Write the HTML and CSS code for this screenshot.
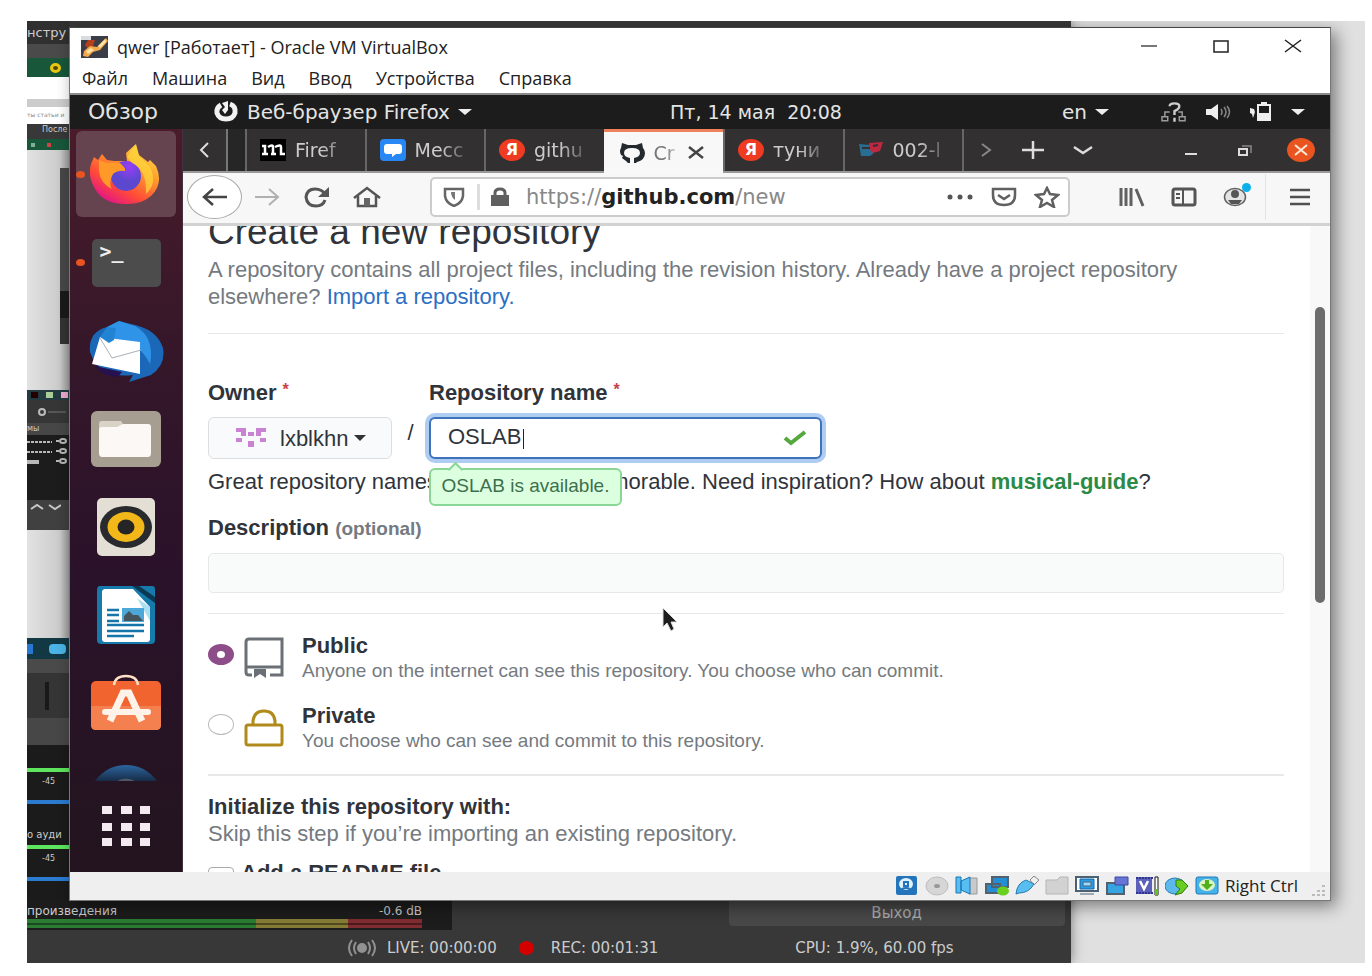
FILE: index.html
```html
<!DOCTYPE html>
<html lang="ru">
<head>
<meta charset="utf-8">
<title>qwer [Работает] - Oracle VM VirtualBox</title>
<link rel="stylesheet" href="styles.css">
</head>
<body>
<main class="desktop">
  <section class="studio" aria-label="OBS">
    <div class="strip">
      <div class="s-title">нстру</div>
      <div class="s-gray"></div>
      <div class="s-green"><i class="smile"></i></div>
      <div class="s-white"></div>
      <div class="s-line"></div>
      <div class="s-addr">ты статьи и</div>
      <div class="s-dark">После</div>
      <div class="s-green2"><i></i><i class="red"></i></div>
      <div class="s-page"><div class="s-inner"></div></div>
      <div class="s-task"><i class="c1"></i><i class="c2"></i><i class="c3"></i></div>
      <div class="s-head"><svg width="30" height="14" viewBox="0 0 30 14"><circle cx="6" cy="7" r="3" fill="none" stroke="#bbb" stroke-width="2"/><path d="M12 7h18" stroke="#777"/></svg></div>
      <div class="s-sub">мы</div>
      <div class="s-log">
        <svg width="42" height="34" viewBox="0 0 42 34" stroke="#b8b8b8" stroke-width="2" fill="none"><path d="M0 7h25M0 17h25" stroke-dasharray="3 1"/><path d="M0 27h12" stroke-width="4"/><path d="M29 6h3M29 16h3M29 26h3"/><ellipse cx="36" cy="6" rx="3" ry="2"/><ellipse cx="36" cy="16" rx="3" ry="2"/><ellipse cx="36" cy="26" rx="3" ry="2"/></svg>
      </div>
      <div class="s-arrows"><svg width="34" height="10" viewBox="0 0 34 10" fill="none" stroke="#c8c8c8" stroke-width="2"><path d="M4 7l6-4 6 4M22 3l6 4 6-4"/></svg></div>
      <div class="s-page2"></div>
      <div class="s-task2"><i></i><i></i></div>
      <div class="s-gray"></div>
      <div class="s-fader"><i></i></div>
      <div class="s-gray3"></div>
      <div class="s-mix"><i class="g"></i><span>-45</span><i class="b"></i><em>о ауди</em><i class="g"></i><span>-45</span><i class="b"></i></div>
    </div>
    <div class="mixer">
      <div class="meter">
        <div class="meter-label"><span>произведения</span><span>-0.6 dB</span></div>
        <div class="meter-bar"><i class="ok"></i><i class="warn"></i><i class="loud"></i></div>
      </div>
      <button class="exit">Выход</button>
    </div>
    <footer class="stats">
      <svg class="live-icon" width="30" height="20" viewBox="0 0 30 20" fill="none" stroke="#929292" stroke-width="2"><circle cx="15" cy="10" r="4" fill="#929292"/><path d="M9 4q-4 6 0 12M5 2q-6 8 0 16M21 4q4 6 0 12M25 2q6 8 0 16"/></svg>
      <span class="live">LIVE: 00:00:00</span><i class="rec-dot"></i><span class="rec">REC: 00:01:31</span><span class="cpu">CPU: 1.9%, 60.00 fps</span>
    </footer>
  </section>

  <section class="vm">
    <header class="titlebar">
      <svg width="27" height="22" viewBox="0 0 27 22"><path fill="#3a3c46" d="M0 0h27v22H0z"/><path fill="#d8dce0" d="M0 0h10v4H0z"/><path fill="#b5401e" d="M7 4h7l-2 6-5 3-3-4z"/><path fill="#f3a94c" d="M3 15l6-5 7 1 9-9 2 3-8 9-7 2-5 5-5-1z"/><path fill="#ffe2a5" d="M5 15l5-3 3 2-6 4zM17 10l7-7 1 3-6 6z"/></svg>
      <h1 class="vm-title">qwer [Работает] - Oracle VM VirtualBox</h1>
      <button class="win-btn" aria-label="Свернуть"><svg width="18" height="16" viewBox="0 0 18 16"><path d="M1 7h16" stroke="#777" stroke-width="2"/></svg></button>
      <button class="win-btn" aria-label="Развернуть"><svg width="18" height="16" viewBox="0 0 18 16"><path d="M2 2h14v11H2z" fill="none" stroke="#222" stroke-width="1.5"/></svg></button>
      <button class="win-btn" aria-label="Закрыть"><svg width="18" height="16" viewBox="0 0 18 16"><path d="M1 1l16 12M17 1L1 13" stroke="#222" stroke-width="1.5"/></svg></button>
    </header>
    <nav class="menubar"><button>Файл</button><button>Машина</button><button>Вид</button><button>Ввод</button><button>Устройства</button><button>Справка</button></nav>

    <div class="guest">
      <div class="panel">
        <button class="activities">Обзор</button>
        <button class="app-menu"><svg width="26" height="22" viewBox="0 0 26 22"><path d="M8 4Q3 7 4 12q2 6 9 6t9-6q1-7-5-9" fill="none" stroke="#f2f2f2" stroke-width="5"/><path d="M9 2l6-2v9l-3 4-3-4 3-3z" fill="#f2f2f2"/></svg><span>Веб-браузер Firefox</span><i class="tri"></i></button>
        <span class="clock">Пт, 14 мая&nbsp; 20:08</span>
        <div class="tray">
          <button class="lang">en <i class="tri"></i></button>
          <svg width="26" height="24" viewBox="0 0 27 24" fill="none" stroke="#9c9c9c" stroke-width="1.5"><path d="M1 17h6v4H1zM19 17h6v4h-6zM4 17v-5h5M22 17v-5h-4"/><path d="M9 6q0-3 5-3t5 3q0 3-5 5v4M14 18v4" stroke="#ccc" stroke-width="2.500"/></svg>
          <svg width="26" height="20" viewBox="0 0 26 20"><path d="M1 7h5l7-5v16l-7-5H1z" fill="#eee"/><path d="M16 7q2 3 0 6M19 5q4 5 0 10M22 4q5 6 0 12" fill="none" stroke="#888" stroke-width="1.5"/></svg>
          <svg width="24" height="22" viewBox="0 0 24 22"><path d="M1 7l4 1 1 3-2 6-1-4-2-1z" fill="#eee"/><path d="M9 4h12v15H9z" fill="none" stroke="#eee" stroke-width="2"/><path d="M12 1h6v3h-6zM10 12h10v6H10z" fill="#eee"/></svg>
          <i class="tri"></i>
        </div>
      </div>
      <aside class="dock">
        <button class="slot active running" aria-label="Firefox"><svg width="72" height="62" viewBox="0 0 72 62"><defs><linearGradient id="ff" x1="1" y1="0" x2=".3" y2="1"><stop offset="0" stop-color="#fff44f"/><stop offset=".4" stop-color="#ffa02d"/><stop offset=".75" stop-color="#ff4a38"/><stop offset="1" stop-color="#e31587"/></linearGradient><radialGradient id="fp" cx=".6" cy=".2"><stop offset="0" stop-color="#9a3df5"/><stop offset="1" stop-color="#5b48cf"/></radialGradient></defs><path fill="url(#ff)" d="M4 14l4 3 4-6 5 6 7 1 13 0-1-8 10-9 3 11 9 7 2-2 6 6q8 18-5 30Q50 62 35 61 16 61 7 49-3 35 1 21z"/><circle cx="36" cy="33" r="15" fill="url(#fp)"/><path fill="#ff9928" d="M9 17l8 3 13 0q6 5 5 8-7-1-12 3-5 9-1 15Q10 40 9 28z"/><path fill="#ffd43b" d="M37 14l8-12 4 11 11 11q8 16-4 27 1-24-14-31z" opacity=".75"/></svg></button>
        <button class="slot running" aria-label="Терминал"><span class="terminal">&gt;_</span></button>
        <button class="slot" aria-label="Thunderbird"><svg width="78" height="62" viewBox="0 0 78 62"><path fill="#1c68b8" d="M3 32Q1 12 20 7L32 1l12 3q26 5 32 24 3 17-12 27l-22 7 4-7Q12 59 3 32z"/><path fill="#2f94e8" d="M20 7L32 1l16 5q20 11 15 38Q49 15 17 22z"/><path fill="#fff" d="M13 17l40 5v32L5 44z"/><path d="M13 18l12 20 29-8" fill="none" stroke="#a9b0b8"/><path fill="#2383d3" d="M13 17L20 7l9 1-2 12-5 3z"/><path fill="#251050" d="M8 46l27 6-4 5Q15 56 8 46z"/></svg></button>
        <button class="slot" aria-label="Файлы"><svg width="72" height="58" viewBox="0 0 72 58"><rect x="1" y="1" width="70" height="56" rx="6" fill="#a69e91"/><path fill="#d9d2c7" d="M9 18V14q0-3 3-3h19l3 5v6H9z"/><path fill="#fcf8f5" d="M9 20q0-3 3-3h15l6-3h25q3 0 3 3v26q0 4-3 4H12q-3 0-3-4z"/></svg></button>
        <button class="slot" aria-label="Rhythmbox"><svg width="60" height="58" viewBox="0 0 60 58"><rect x="1" y="0" width="58" height="58" rx="5" fill="#e4dfd4"/><ellipse cx="30" cy="29" rx="26" ry="21" fill="#292a2d"/><ellipse cx="30" cy="29" rx="18.5" ry="15" fill="#f2b81a"/><ellipse cx="30" cy="29" rx="8.500" ry="7.500" fill="#252525"/></svg></button>
        <button class="slot" aria-label="Writer"><svg width="60" height="58" viewBox="0 0 60 58"><path fill="#167aaa" d="M4 0h52q3 0 3 3v51q0 4-4 4H5q-4 0-4-4V4q0-4 3-4z"/><path fill="#fff" d="M8 3h29l17 18v32q0 3-3 3H9q-3 0-3-3V5z"/><path fill="#0b3954" d="M36 0l23 17v-6L43 0z"/><path fill="#75c9e8" d="M41 12l13 9v14z" opacity=".6"/><path d="M11 24h12M11 29h12M11 35h12M11 39h37M11 45h37M11 50h27" stroke="#1675a8" stroke-width="2.500"/><path fill="#4ba8d8" d="M26 22h22v14H26z"/><path fill="#46545b" d="M28 35v-5l5-5 4 4h5l5 6z"/></svg></button>
        <button class="slot" aria-label="Ubuntu Software"><svg width="72" height="58" viewBox="0 0 72 58"><rect x="1" y="7" width="70" height="49" rx="5" fill="#f16430"/><path fill="#f4804f" d="M1 32h70v19q0 5-5 5H6q-5 0-5-5z"/><path d="M24 11Q25 2 36 2t12 9" fill="none" stroke="#ffe0c5" stroke-width="2.500"/><path d="M20 47l13-28h6l13 28" fill="none" stroke="#fff2e8" stroke-width="7"/><path d="M15 38h43" stroke="#fff2e8" stroke-width="6" stroke-linecap="round"/></svg></button>
        <button class="slot peek" aria-label="Справка"><svg width="66" height="16" viewBox="0 0 66 16"><defs><linearGradient id="hp" x2="0" y2="1"><stop stop-color="#2c659e"/><stop offset="1" stop-color="#172c48"/></linearGradient></defs><path fill="url(#hp)" d="M2 16Q14 0 33 0t31 16z"/><path fill="#4e5866" d="M24 16q9-5 18 0z"/></svg></button>
        <button class="slot apps" aria-label="Показать приложения"><svg width="50" height="42" viewBox="0 0 50 42" fill="#f3eaf0"><path d="M1 1h10v8H1zM20 1h11v8H20zM39 1h10v8H39zM1 18h10v8H1zM20 18h11v8H20zM39 18h10v8H39zM1 33h10v8H1zM20 33h11v8H20zM39 33h10v8H39z"/></svg></button>
      </aside>

      <div class="firefox">
        <div class="tabstrip">
          <button class="scroll-left" aria-label="Назад"><svg width="12" height="18" viewBox="0 0 12 18"><path d="M10 2L3 9l7 7" fill="none" stroke="#ddd" stroke-width="2"/></svg></button>
          <button class="tab"><svg width="26" height="22" viewBox="0 0 26 22"><path d="M0 0h26v22H0z"/><path d="M2 7h3v8M2 15h6M8 8q5-3 5 0v7M11 15h5M15 8q6-3 6 0v7h4" fill="none" stroke="#fff" stroke-width="2.500"/></svg><span>Firef</span></button>
          <button class="tab"><svg width="26" height="22" viewBox="0 0 26 22"><rect width="26" height="22" rx="4" fill="#2787f5"/><path d="M7 5h12q3 0 3 3v4q0 3-3 3h-3l-4 3v-3H7q-3 0-3-3V8q0-3 3-3z" fill="#fff"/></svg><span>Месс</span></button>
          <button class="tab"><b class="ya">Я</b><span>githu</span></button>
          <button class="tab current"><svg width="26" height="22" viewBox="0 0 26 22"><path fill="#24292e" fill-rule="evenodd" d="M3 1l6 2h8l6-2 1 5q2 2 2 5 0 7-8 9l-1 1h-2v-5q6-1 6-5 0-5-8-5t-8 5q0 4 6 5v5H9l-2-2-4-3 1-2-2-1Q0 9 2 6z"/></svg><span>Cr</span><svg width="18" height="16" viewBox="0 0 18 16"><path d="M2 2l14 11M16 2L2 13" stroke="#444" stroke-width="2.500"/></svg></button>
          <button class="tab"><b class="ya">Я</b><span>туни</span></button>
          <button class="tab"><svg width="26" height="20" viewBox="0 0 26 20"><path fill="#286d92" d="M1 4l11 1 4 3-1 6-3 2H3z"/><path fill="#bd2940" d="M11 3l14-1-3 9-7 2-4-4z"/><path d="M4 8h8M15 6l5-1" stroke="#323031" stroke-width="2"/></svg><span>002-l</span></button>
          <div class="tab-tools">
            <button aria-label="Вперёд"><svg width="14" height="16" viewBox="0 0 14 16"><path d="M2 2l8 6-8 6" fill="none" stroke="#888" stroke-width="2"/></svg></button>
            <button aria-label="Новая вкладка"><svg width="24" height="20" viewBox="0 0 24 20"><path d="M1 10h22M12 1v18" stroke="#ddd" stroke-width="2.500"/></svg></button>
            <button aria-label="Список вкладок"><svg width="22" height="14" viewBox="0 0 22 14"><path d="M2 4l9 6 9-6" fill="none" stroke="#ddd" stroke-width="2.500"/></svg></button>
            <button class="minimize" aria-label="Свернуть"><svg width="14" height="14" viewBox="0 0 14 14"><path d="M1 11h12" stroke="#ddd" stroke-width="2"/></svg></button>
            <button aria-label="Восстановить"><svg width="14" height="12" viewBox="0 0 14 12" fill="none" stroke="#ddd" stroke-width="2"><path d="M1 5h8v6H1z"/><path d="M4 2h9v7" stroke="#888" stroke-width="1.500"/></svg></button>
            <button class="close" aria-label="Закрыть"><svg width="14" height="12" viewBox="0 0 14 12"><path d="M1 1l12 10M13 1L1 11" stroke="#ffe8d8" stroke-width="2"/></svg></button>
          </div>
        </div>
        <div class="toolbar">
          <button class="back" aria-label="Назад"><svg width="28" height="22" viewBox="0 0 28 22"><path d="M26 11H3M12 3L3 11l9 8" fill="none" stroke="#444" stroke-width="2.500"/></svg></button>
          <button class="nav-btn" aria-label="Вперёд"><svg width="28" height="22" viewBox="0 0 28 22"><path d="M2 11h23M16 3l9 8-9 8" fill="none" stroke="#b0b0b0" stroke-width="2"/></svg></button>
          <button class="nav-btn" aria-label="Обновить"><svg width="28" height="22" viewBox="0 0 28 22"><path d="M22 14q-2 6-9 6-9 0-10-9Q4 3 12 3q7 0 11 6" fill="none" stroke="#555" stroke-width="3"/><path d="M26 1v10H15z" fill="#555"/></svg></button>
          <button class="nav-btn" aria-label="Домой"><svg width="28" height="22" viewBox="0 0 28 22"><path d="M1 12L14 2l13 10M5 10v10h18V10" fill="none" stroke="#555" stroke-width="2.500"/><path d="M11 12h6v8h-6z" fill="#666"/></svg></button>
          <div class="urlbar">
            <svg width="22" height="20" viewBox="0 0 22 20"><path d="M2 2h18v7q-1 7-9 10Q3 16 2 9z" fill="none" stroke="#666" stroke-width="2.500"/><path d="M8 5h4v8q-4-3-4-8z" fill="#777"/></svg>
            <i class="sep"></i>
            <svg width="20" height="20" viewBox="0 0 20 20"><path fill="#606060" d="M1 8h18v11H1z"/><path d="M5 9V6q0-4 5-4t5 4v3" fill="none" stroke="#606060" stroke-width="3"/></svg>
            <div class="url" role="textbox" aria-label="Адрес">https://<b>github.com</b>/new</div>
            <svg width="28" height="8" viewBox="0 0 28 8" fill="#555"><circle cx="4" cy="4" r="2.500"/><circle cx="14" cy="4" r="2.500"/><circle cx="24" cy="4" r="2.500"/></svg>
            <svg width="28" height="20" viewBox="0 0 28 20" fill="none" stroke="#606060" stroke-width="2.500"><path d="M3 2h22v6q0 10-11 10T3 8z"/><path d="M8 8l6 4 6-4"/></svg>
            <svg width="26" height="22" viewBox="0 0 26 22"><path d="M13 2l3 6 8 1-6 5 2 7-7-4-7 4 2-7-6-5 8-1z" fill="none" stroke="#606060" stroke-width="2.500"/></svg>
          </div>
          <div class="extras">
            <button aria-label="Библиотека"><svg width="26" height="20" viewBox="0 0 26 20"><path d="M2 1v18M7 1v18M12 1v18M17 2l7 17" stroke="#606060" stroke-width="3"/></svg></button>
            <button aria-label="Боковая панель"><svg width="26" height="20" viewBox="0 0 26 20" fill="none" stroke="#555"><rect x="2" y="2" width="22" height="16" rx="2" stroke-width="3"/><path d="M12 2v16M5 7h4M5 11h4" stroke-width="2"/></svg></button>
            <button class="account" aria-label="Аккаунт"><svg width="24" height="20" viewBox="0 0 24 20"><ellipse cx="12" cy="10" rx="10.500" ry="8.500" fill="#e4e4e4" stroke="#606060" stroke-width="1.500"/><circle cx="12" cy="7" r="4" fill="#555"/><path d="M5 13h14l-3 4H8z" fill="#555"/></svg><i></i></button>
            <button class="burger" aria-label="Меню"><svg width="20" height="18" viewBox="0 0 20 18"><path d="M0 2h20M0 9h20M0 16h20" stroke="#505050" stroke-width="2.500"/></svg></button>
          </div>
        </div>

        <div class="viewport">
          <form class="page">
            <h2>Create a new repository</h2>
            <p class="lead">A repository contains all project files, including the revision history. Already have a project repository elsewhere? <a href="#import">Import a repository.</a></p>
            <hr>
            <div class="names">
              <div class="field"><label for="owner">Owner <sup>*</sup></label>
                <button id="owner" type="button" class="owner"><svg width="30" height="22" viewBox="0 0 30 22" fill="#ca83d3"><path d="M0 1h10v4H0zM20 1h10v4H20zM5 5h5v4H5zM20 5h5v4h-5zM12 5h6v4h-6zM0 11h6v4H0zM24 11h6v4h-6zM12 14h6v6h-6z"/></svg><span>lxblkhn</span><i></i></button></div>
              <span class="slash">/</span>
              <div class="field"><label for="repo">Repository name <sup>*</sup></label>
                <div class="repo"><input id="repo" type="text" value="OSLAB" autocomplete="off" spellcheck="false"><i class="caret"></i><svg class="check" width="24" height="18" viewBox="0 0 24 18"><path d="M2 9l6 5L22 3" fill="none" stroke="#54a83d" stroke-width="4"/></svg><output class="tip" for="repo">OSLAB is available.</output></div></div>
            </div>
            <p class="hint">Great repository names are short and memorable. Need inspiration? How about <strong>musical-guide</strong>?</p>
            <label class="desc" for="desc">Description <small>(optional)</small></label>
            <input id="desc" class="wide" type="text">
            <hr>
            <div class="choice"><input type="radio" name="vis" id="public" checked>
              <svg width="40" height="42" viewBox="0 0 40 42" fill="none" stroke="#6a7076" stroke-width="3"><path d="M8 38H5q-3 0-3-3V5q0-3 3-3h33v36H26M2 30h36"/><path d="M10 32h12v9l-6-4-6 4z" fill="#6a7076" stroke="none"/></svg>
              <label for="public"><b>Public</b><span>Anyone on the internet can see this repository. You choose who can commit.</span></label></div>
            <div class="choice"><input type="radio" name="vis" id="private">
              <svg width="40" height="38" viewBox="0 0 40 38" fill="none" stroke="#b08b1b" stroke-width="3"><rect x="2" y="16" width="36" height="20" rx="2"/><path d="M9 16v-4Q10 2 20 2t11 10v4"/></svg>
              <label for="private"><b>Private</b><span>You choose who can see and commit to this repository.</span></label></div>
            <hr class="thick">
            <h3>Initialize this repository with:</h3>
            <p class="skip">Skip this step if you’re importing an existing repository.</p>
            <div class="readme"><input type="checkbox" id="readme"><label for="readme">Add a README file</label></div>
          </form>
          <div class="scrollbar"><i></i></div>
          <svg class="pointer" width="16" height="26" viewBox="0 0 16 26"><path d="M1 1v19l4-4 4 8 3-2-3-7h6z" fill="#1d1d1d" stroke="#ddd"/></svg>
        </div>
      </div>
    </div>

    <footer class="statusbar">
      <svg viewBox="0 0 24 20"><rect x="1" width="21" height="19" rx="2" fill="#2474bb"/><ellipse cx="11" cy="8" rx="7" ry="6" fill="#dff1ff"/><path d="M6 16q0-4 5-4t5 4M9 6h4v4H9z" fill="none" stroke="#2474bb" stroke-width="2"/></svg>
      <svg viewBox="0 0 24 20"><ellipse cx="12" cy="10" rx="11" ry="9" fill="#d6d6d6" stroke="#bdbdbd"/><ellipse cx="12" cy="10" rx="3" ry="2" fill="#999"/></svg>
      <svg viewBox="0 0 24 20"><path fill="#c9c9c9" stroke="#999" d="M14 2h8v16h-8z"/><path fill="#57bdf2" stroke="#1976b4" d="M1 1h5v16H1zM6 5l9-4v17l-9-4z"/></svg>
      <svg viewBox="0 0 24 20"><path fill="#248ed5" stroke="#52616d" stroke-width="2" d="M7 1h16v10H7zM1 8h14v9H1z"/><ellipse cx="18" cy="15" rx="6" ry="4.500" fill="#6bcf20"/></svg>
      <svg viewBox="0 0 24 20"><path fill="#eee" stroke="#888" d="M15 4l4-4 5 4-5 5z"/><path fill="#58bdf1" stroke="#277baa" d="M1 18q1-11 10-14l8 4q-5 9-15 9z"/></svg>
      <svg viewBox="0 0 24 20"><path fill="#d2d2d2" stroke="#b5b5b5" d="M1 4h11l3-3h8v17H1z"/></svg>
      <svg viewBox="0 0 24 20"><path fill="#fff" stroke="#4c6274" stroke-width="2" d="M1 1h22v14H1z"/><path fill="#299de5" stroke="#1266a8" d="M5 3h14v10H5z"/><path d="M8 6h8v4H8zM5 18h14" fill="#98daff" stroke="#4c6274"/></svg>
      <svg viewBox="0 0 24 20"><path fill="#35a4e0" stroke="#52616d" stroke-width="2" d="M2 7h17v11H2z"/><path fill="#6874d4" stroke="#3c49a4" d="M10 1h13v8H10z"/></svg>
      <svg viewBox="0 0 24 20"><path fill="#5b60b8" d="M1 1h16v17H1z"/><path d="M1 2h17M1 17h17" stroke="#30368f" stroke-width="2" stroke-dasharray="2 1"/><path d="M5 5l4 8 4-8" fill="none" stroke="#fff" stroke-width="2.500"/><path fill="#fff" stroke="#111" d="M20 1h3v18h-3z"/><path fill="#5cc621" d="M20 13h3v6h-3z"/></svg>
      <svg viewBox="0 0 24 20"><ellipse cx="10" cy="10" rx="10" ry="8" fill="#5bb9ee" stroke="#2b7eb3"/><path d="M11 4h6l6 6-6 7-7 2 5-6-4-3z" fill="#68cc22" stroke="#317c0d"/></svg>
      <svg viewBox="0 0 24 20"><rect x="1" y="1" width="22" height="17" rx="2" fill="#45b2e9" stroke="#1e78b4"/><ellipse cx="12" cy="9" rx="8" ry="6" fill="#d9f5c2"/><path d="M10 4h4v4h4l-6 6-6-6h4z" fill="#51ae1d"/></svg>
      <span>Right Ctrl</span>
      <svg class="grip" viewBox="0 0 14 12" fill="#bbb"><path d="M10 0h3v2h-3zM5 5h3v2H5zM10 5h3v2h-3zM0 9h3v2H0zM5 9h3v2H5zM10 9h3v2h-3z"/></svg>
    </footer>
  </section>
</main>
</body>
</html>
```
FILE: styles.css
```css
* { box-sizing: border-box; }
body { margin: 0; background: #fff; font-family: "Liberation Sans", Arial, sans-serif; }
button, input { font: inherit; color: inherit; }
button { background: none; border: 0; padding: 0; white-space: nowrap; }
svg { display: block; flex: none; }
i { display: block; flex: none; font-style: normal; }

.desktop {
  display: grid;
  grid-template: minmax(0, 1fr) / minmax(0, 1fr);
  height: calc(100vh - 34px);
  margin: 21px 7px 13px 27px;
  background: #e0e0e0;
  overflow: hidden;
}
.studio, .vm { grid-area: 1 / 1; display: flex; flex-direction: column; position: relative; overflow: hidden; }

/* recording studio behind the VM */
.studio { width: 78%; background: #383838; color: #ccc; box-shadow: 0 0 12px #777; font-family: "DejaVu Sans", sans-serif; }
.strip { display: flex; flex-direction: column; flex: 1; min-height: 0; width: 43px; overflow: hidden; font-size: 8px; white-space: nowrap; }
.strip > * { flex: none; overflow: hidden; }
.s-title { height: 23px; background: #303030; font-size: 13px; line-height: 24px; }
.s-gray { height: 14px; background: #4a4a4a; }
.s-green { display: flex; justify-content: flex-end; align-items: center; padding-right: 9px; height: 19px; background: #18573a; }
.smile { width: 11px; height: 10px; border: 3px solid #e8c810; border-radius: 50%; background: #540; }
.s-white { height: 22px; background: #fff; }
.s-line { height: 8px; background: #ccc; }
.s-addr { height: 17px; background: #fff; color: #888; font-size: 6px; line-height: 16px; }
.s-dark { height: 15px; padding-left: 15px; background: #383838; line-height: 12px; }
.s-green2 { display: flex; gap: 12px; align-items: center; height: 11px; padding-left: 4px; background: #18573a; }
.s-green2 i { width: 4px; height: 4px; background: #7fb096; }
.s-green2 .red { background: #c44; }
.s-page { display: flex; justify-content: flex-end; height: 240px; padding: 18px 0 46px; background: linear-gradient(90deg, #e2e2e2, #ccc 75%, #999); }
.s-inner { width: 10px; background: linear-gradient(#484848 70%, #1a1a1a 70% 85%, #333 85%); }
.s-task { display: flex; gap: 8px; align-items: center; height: 10px; padding-left: 4px; background: #233b40; }
.s-task i { width: 7px; height: 6px; }
.c1 { background: #200; }
.c2 { background: #ac9; }
.c3 { background: #eac; }
.s-head { display: flex; align-items: center; height: 23px; padding-left: 9px; background: #363636; }
.s-sub { height: 12px; background: #474747; line-height: 11px; }
.s-log { height: 65px; background: #1c1c1c; }
.s-arrows { height: 30px; padding-top: 2px; background: #404040; }
.s-page2 { height: 108px; background: linear-gradient(90deg, #e2e2e2, #ccc 75%, #999); }
.s-task2 { display: flex; gap: 16px; align-items: center; height: 21px; background: #123844; }
.s-task2 i { width: 6px; height: 10px; background: #2777d0; }
.s-task2 i + i { width: 17px; background: #4bb3e6; border-radius: 4px; }
.s-fader { display: flex; align-items: center; height: 45px; padding-left: 18px; background: #353535; }
.s-fader i { width: 4px; height: 28px; background: #191919; }
.s-gray3 { height: 27px; background: #474747; }
.s-mix { display: flex; flex-direction: column; height: 156px; padding-top: 23px; background: #1b1b1b; line-height: 20px; }
.s-mix i { height: 4px; background: #5ee65e; }
.s-mix .b { margin: 8px 0 0; background: #2b7bd0; }
.s-mix span { padding-left: 15px; }
.s-mix em { margin: 21px 0 0; font-style: normal; font-size: 10px; }
.mixer { display: flex; justify-content: space-between; flex: none; height: 30px; }
.meter { width: 425px; padding-right: 30px; background: #1c1c1c; }
.meter-label { display: flex; justify-content: space-between; height: 19px; font-size: 12px; line-height: 22px; }
.meter-bar { display: flex; height: 9px; }
.meter-bar i { flex: 229; background: linear-gradient(#0000 4px, #0006 4px 6px, #0000 6px) #2b7b33; }
.meter-bar .warn { flex: 92; background-color: #857b35; }
.meter-bar .loud { flex: 74; background-color: #812c30; }
.exit { width: 336px; height: 26px; margin-right: 6px; border-radius: 0 0 4px 4px; background: #484848; color: #aaa; font-size: 15px; }
.stats { display: flex; align-items: center; flex: none; height: 33px; padding: 2px 0 0 320px; font-size: 15px; line-height: 20px; white-space: nowrap; }
.live { margin-left: 10px; }
.rec-dot { width: 15px; height: 14px; margin: 0 17px 0 22px; border-radius: 50%; background: #d40000; }
.cpu { margin: 0 117px 0 auto; }

/* virtual machine window */
.vm { margin: 6px 34px 62px 42px; border: 1px solid #777; border-top-color: #444; background: #fff; box-shadow: 5px 5px 16px #0007; color: #222; font-family: "Open Sans", sans-serif; }
.titlebar { display: flex; align-items: center; flex: none; height: 37px; padding: 0 1px 0 11px; }
.vm-title { flex: 1; margin: 0 0 0 9px; font-size: 18px; line-height: 24px; font-weight: 400; }
.win-btn { display: grid; place-items: center; width: 72px; height: 30px; }
.menubar { display: flex; gap: 24px; flex: none; height: 30px; padding: 0 12px 3px; border-bottom: 2px solid #8b8b8b; font-size: 18px; line-height: 26px; }

.guest { display: grid; grid-template: 34px minmax(0, 1fr) / 113px minmax(0, 1fr); flex: 1; min-height: 0; font-family: "DejaVu Sans", sans-serif; }
.panel { grid-column: 1 / 3; display: grid; grid-template-columns: 143px minmax(0, 1fr) auto minmax(0, 1fr) 31px; align-items: center; background: #1c1c1c; color: #e4e4e4; font-size: 20px; line-height: 24px; }
.activities { justify-self: start; padding-left: 18px; font-size: 22px; }
.app-menu { display: flex; align-items: center; gap: 8px; }
.tri { border: 7px solid transparent; border-top: 6px solid #eee; border-bottom: 0; }
.clock { font-size: 19px; }
.lang { display: flex; align-items: center; gap: 8px; margin-right: 34px; }
.tray { grid-column: 4 / 6; display: flex; align-items: center; justify-content: flex-end; gap: 18px; padding-right: 25px; }

.dock { display: flex; flex-direction: column; align-items: center; min-height: 0; padding-top: 2px; border-right: 1px solid #443040; background: linear-gradient(#4a1c2b, #351729 30%, #2a122a 60%, #23141f); overflow: hidden; }
.slot { display: flex; align-items: center; justify-content: center; position: relative; flex: none; width: 100px; height: 88px; }
.active { height: 86px; margin-bottom: 2px; border-radius: 6px; background: #65434f; }
.running::before { content: ""; position: absolute; left: 0; top: 40px; width: 9px; height: 7px; border-radius: 50%; background: #e95420; }
.terminal { width: 69px; height: 48px; padding: 2px 8px; border-radius: 5px; background: #4c4c4c; color: #eee; font: bold 20px/20px "DejaVu Sans Mono", monospace; text-align: left; }
.peek { align-items: flex-end; height: 34px; }
.apps { height: 90px; }

.firefox { display: flex; flex-direction: column; min-height: 0; }
.tabstrip { display: flex; flex: none; height: 44px; border-bottom: 2px solid #999; background: #323031; color: #ccc; font-size: 19px; }
.scroll-left { display: flex; align-items: center; width: 62px; padding-left: 15px; background: linear-gradient(90deg, transparent 43px, #777 43px 45px, #262626 45px); }
.tab { display: flex; align-items: center; flex: 1; min-width: 0; gap: 9px; padding-left: 13px; border-left: 2px solid #666; }
.tab span { width: 52px; overflow: hidden; text-align: left; -webkit-mask-image: linear-gradient(90deg, #000 50%, #0003); mask-image: linear-gradient(90deg, #000 50%, #0003); }
.current { height: 44px; padding-left: 15px; border-left: 0; border-top: 3px solid #ee805c; background: #f8f8f8; color: #777; }
.tab.current span { width: 24px; }
.ya { flex: none; width: 26px; height: 22px; border-radius: 50%; background: #ee3b22; color: #fff; font-size: 16px; line-height: 22px; }
.tab-tools { display: grid; grid-template-columns: 46px 46px 54px 1fr 54px 58px; align-items: center; justify-items: center; flex: none; width: 368px; border-left: 2px solid #666; }
.minimize { justify-self: end; padding-right: 20px; }
.close { display: grid; place-items: center; width: 28px; height: 24px; border-radius: 50%; background: #e95420; }

.toolbar { display: flex; align-items: center; flex: none; height: 53px; padding: 0 20px 3px 4px; border-bottom: 3px solid #d2d2d2; background: #f7f7f7; }
.back { display: grid; place-items: center; width: 55px; height: 44px; border: 1px solid #aaa; border-radius: 50%; background: #fff; }
.nav-btn { width: 28px; margin-left: 22px; }
.back + .nav-btn { margin-left: 11px; }
.urlbar { display: flex; align-items: center; flex: 1; height: 40px; margin-left: 49px; padding: 0 8px 0 11px; border: 2px solid #ccc; border-radius: 5px; background: #fff; }
.sep { width: 3px; height: 26px; margin: 0 10px 0 12px; background: #ddd; }
.url { flex: 1; margin-left: 16px; color: #888; font-size: 21px; line-height: 28px; white-space: nowrap; }
.url b { color: #222; font-weight: 700; }
.urlbar svg + svg { margin-left: 16px; }
.extras { display: flex; align-items: center; gap: 26px; margin-left: 49px; }
.account { position: relative; }
.account i { position: absolute; right: -4px; top: -4px; width: 9px; height: 9px; border-radius: 50%; background: #0db1ea; }
.burger { margin-left: -8px; padding: 14px 0 14px 24px; border-left: 1px solid #e4e4e4; }

.viewport { position: relative; display: flex; flex: 1; min-height: 0; overflow: hidden; background: #fff; }
.page { flex: 1; height: 100%; min-width: 0; padding: 0 26px 0 25px; overflow: hidden; color: #30343a; font-family: "Liberation Sans", Arial, sans-serif; font-size: 22px; line-height: 27px; }
.page h2 { margin: -14px 0 4px; font-size: 37px; line-height: 40px; font-weight: 400; }
.page p { margin: 0; }
.lead, .skip { color: #747a80; }
.page a { color: #2d6fc4; text-decoration: none; }
.page hr { height: 1px; margin: 23px 0 45px; border: 0; background: #e8e8e8; }
.names { display: flex; align-items: flex-end; }
.field { display: flex; flex-direction: column; gap: 11px; }
.page label { font-weight: 700; }
.page sup { color: #c6424d; font-size: 16px; line-height: 10px; vertical-align: 5px; }
.owner { display: flex; align-items: center; gap: 14px; width: 184px; height: 42px; padding-left: 27px; border: 1px solid #dcdee0; border-radius: 6px; background: #f9fafb; }
.owner span { margin-right: -8px; }
.owner i { border: 6px solid transparent; border-top: 6px solid #333; border-bottom: 0; }
.slash { width: 37px; padding-bottom: 13px; text-align: center; }
.repo { position: relative; width: 393px; }
.repo input { display: block; width: 100%; height: 42px; padding: 0 50px 2px 17px; border: 2px solid #3f73b9; border-radius: 6px; outline: 0; background: #fff; box-shadow: 0 0 0 4px #afcdf2; }
.caret { position: absolute; left: 94px; top: 12px; width: 1px; height: 20px; background: #222; }
.check { position: absolute; right: 15px; top: 12px; }
.tip { position: absolute; left: 0; top: 51px; width: 193px; height: 38px; border: 2px solid #8ad696; border-radius: 6px; background: #dcffe0; color: #3d704d; font-size: 19px; line-height: 32px; text-align: center; white-space: nowrap; }
.tip::before { content: ""; position: absolute; left: 19px; top: -6px; width: 9px; height: 9px; border: solid #8ad696; border-width: 2px 0 0 2px; background: #dcffe0; transform: rotate(45deg); }
.page .hint { margin: 9px 0 19px; }
.hint strong { color: #2b8a45; }
.desc { display: block; }
.desc small { color: #747a80; font-size: 19px; }
.wide { display: block; width: 100%; height: 40px; margin-top: 11px; border: 1px solid #e6e8e8; border-radius: 5px; background: #f9fbfa; }
.page .wide + hr { margin: 20px 0 9px; }
.choice { display: flex; align-items: center; height: 70px; }
.choice svg { margin: 0 18px 0 10px; }
.choice b, .choice span { display: block; line-height: 25px; }
.choice span { color: #747a80; font-size: 19px; font-weight: 400; white-space: nowrap; }
.choice input { appearance: none; width: 26px; height: 21px; margin: 0 0 8px; border: 1px solid #bbb; border-radius: 50%; background: #fff; }
.choice input:checked { border: 8px solid #8d4d89; border-width: 7px 9px; }
.page .thick { height: 2px; margin: 11px 0 17px; }
.page h3 { margin: 0; font-size: 22px; line-height: 27px; }
.readme { display: flex; gap: 7px; margin-top: 12px; }
.readme input { appearance: none; width: 26px; height: 22px; margin: 8px 0 0; border: 1px solid #aaa; border-radius: 4px; }
.scrollbar { display: flex; justify-content: center; width: 20px; padding-top: 81px; background: #f8f8f8; }
.scrollbar i { width: 10px; height: 296px; border-radius: 5px; background: #6c6c6c; }
.pointer { position: absolute; left: 479px; top: 381px; }

.statusbar { display: flex; align-items: center; justify-content: flex-end; gap: 6px; flex: none; height: 28px; padding-right: 4px; background: #efefef; font-size: 17px; line-height: 20px; }
.statusbar svg { width: 24px; height: 20px; }
.statusbar span { margin-right: 8px; }
.statusbar .grip { width: 14px; height: 12px; align-self: flex-end; margin-bottom: 3px; }
```
